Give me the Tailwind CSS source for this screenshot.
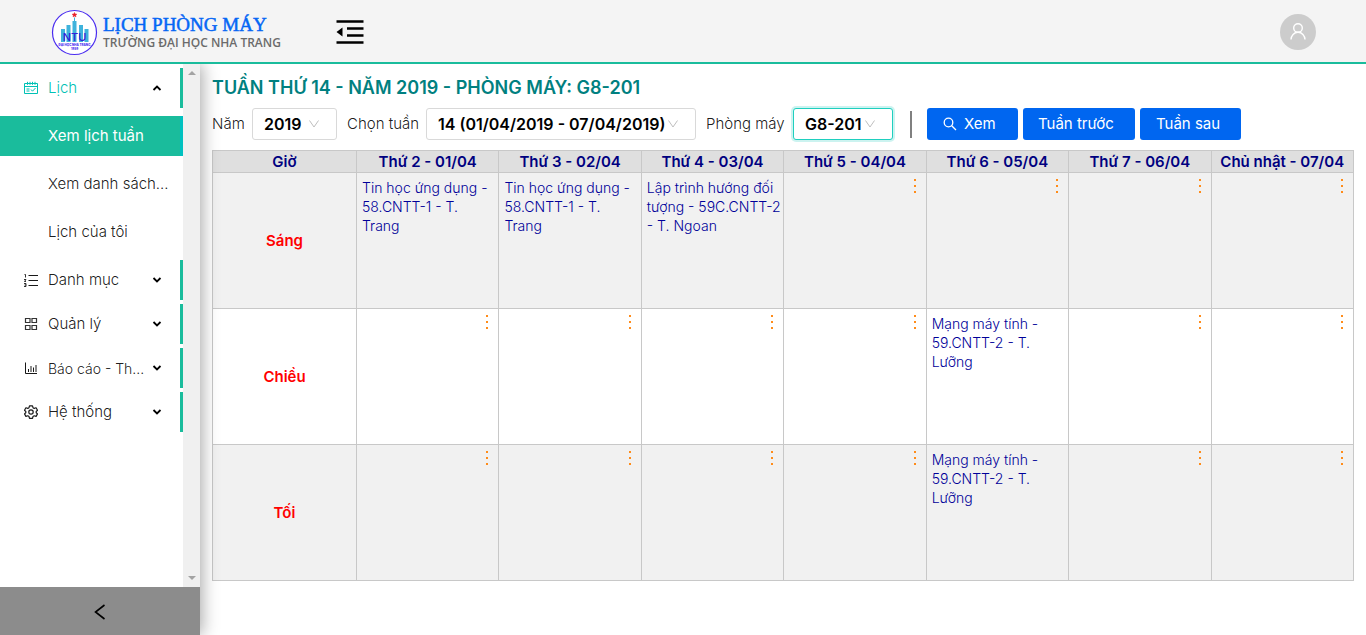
<!DOCTYPE html>
<html lang="vi">
<head>
<meta charset="utf-8">
<meta name="viewport" content="width=device-width, initial-scale=1">
<title>Lịch phòng máy</title>
<script src="https://cdn.jsdelivr.net/npm/@tailwindcss/browser@4"></script>
</head>
<body class="flex h-screen flex-col overflow-hidden bg-white font-['Inter','Liberation_Sans',sans-serif] text-[15px] font-light text-black/90">

<header class="relative z-20 flex h-16 shrink-0 items-center border-b-2 border-[#1abc9c] bg-[#f4f4f4] pt-[2px] pr-[50px] pl-[51px]">
  <a href="#" class="flex items-center gap-[5px]">
    <svg class="size-[47px]" viewBox="0 0 47 47" aria-hidden="true">
      <circle cx="23.500" cy="23.500" r="22" fill="#fff" stroke="#4a2cf0" stroke-width="1.200"/>
      <path d="M10 20h4v13h-4zM15.500 16h4v17h-4zM21.500 12h4v21h-4zM28 16h4v17h-4zM33.500 20h4v13h-4z" fill="#3fb3dc"/>
      <path d="M23.500 3.500l.7 1.500 1.700.200-1.200 1.100.300 1.600-1.500-.8-1.500.8.300-1.600-1.200-1.100 1.700-.200z" fill="#e8202a" stroke="#e8202a" stroke-width=".5"/>
      <path d="M23.500 8.500v4" stroke="#3fb3dc" stroke-width="1"/>
      <text x="23.500" y="32" text-anchor="middle" font-family="Inter, sans-serif" font-size="11" font-weight="500" fill="#3420d8">NTU</text>
      <text x="23.500" y="36.500" text-anchor="middle" font-family="Inter, sans-serif" font-size="3" font-weight="800" fill="#4a2cf0">ĐẠI HỌC NHA TRANG</text>
      <text x="23.500" y="40.500" text-anchor="middle" font-family="Inter, sans-serif" font-size="3" font-weight="800" fill="#4a2cf0">1959</text>
    </svg>
    <span class="flex flex-col whitespace-nowrap">
      <span class="font-['Liberation_Serif',serif] text-[19px] leading-[22px] font-normal text-[#0566f5] [-webkit-text-stroke:0.500px_#0566f5]">LỊCH PHÒNG MÁY</span>
      <span class="font-['Open_Sans',sans-serif] text-[12px] leading-[14px] font-semibold text-[#6b6b6b]">TRƯỜNG ĐẠI HỌC NHA TRANG</span>
    </span>
  </a>
  <button class="ml-[55px]" aria-label="Thu gọn menu">
    <svg class="h-[26px] w-7" viewBox="0 0 28 26" aria-hidden="true"><path d="M.5 2.500h27M11 9.500h16.500M11 16.500h16.500M.5 23.500h27" stroke="#000" stroke-width="2.600"/><path d="M6.500 8.500v9L.5 13z" fill="#000"/></svg>
  </button>
  <button class="ml-auto flex size-9 items-center justify-center rounded-full bg-[#ccc]" aria-label="Tài khoản">
    <svg class="size-[18px]" viewBox="0 0 18 18" fill="none" stroke="#fff" stroke-width="1.400" aria-hidden="true"><circle cx="9" cy="5" r="4.300"/><path d="M2 16.500c.2-4 3-7.200 7-7.200s6.800 3.200 7 7.200"/></svg>
  </button>
</header>

<div class="flex min-h-0 flex-1">
  <aside class="z-10 flex w-[200px] shrink-0 flex-col shadow-[2px_0_16px_rgba(0,0,0,0.35)]">
    <div class="flex min-h-0 flex-1 bg-white">
      <nav class="min-w-0 flex-1 overflow-hidden pt-1">
        <ul class="flex flex-col gap-1">
          <li>
            <a href="#" class="flex h-10 items-center border-r-[3px] border-[#1abc9c] pr-[18px] pl-6 text-[#00c1b5]">
              <svg class="mr-[10px] size-[14px] shrink-0" viewBox="0 0 14 14" fill="none" stroke="currentColor" aria-hidden="true"><path d="M.5 2.500h13v10H.5zM.5 5.500h13M3.500 .8v3M6 .8v3M8.500 .8v3M11 .8v3M2.500 8h3M2.500 10h3M7 8.500l1.500 1.700L11.500 7"/></svg>
              <span class="flex-1">Lịch</span>
              <svg class="size-[10px] text-black" viewBox="0 0 10 10" fill="none" stroke="currentColor" stroke-width="1.800" aria-hidden="true"><path d="M1.500 7 5 3.500 8.500 7"/></svg>
            </a>
            <ul class="mt-2 mb-1 flex flex-col gap-2">
              <li><a href="#" class="flex h-10 items-center border-r-[3px] border-[#00c1c0] bg-[#1abc9c] pl-12 font-normal text-white">Xem lịch tuần</a></li>
              <li><a href="#" class="flex h-10 items-center pl-12 whitespace-nowrap">Xem danh sách...</a></li>
              <li><a href="#" class="flex h-10 items-center pl-12">Lịch của tôi</a></li>
            </ul>
          </li>
          <li>
            <a href="#" class="flex h-10 items-center border-r-[3px] border-[#1abc9c] pr-[18px] pl-6">
              <svg class="mr-[10px] size-[14px] shrink-0" viewBox="0 0 14 14" fill="none" stroke="currentColor" aria-hidden="true"><path d="M4.500 2.500H14M4.500 7.500H14M4.500 12.500H14"/><path d="M.5 1.500h1v3M0 6.500h2L.5 8.500H2M0 10.500h2v3H0M.5 12H2" stroke-width=".9"/></svg>
              <span class="flex-1">Danh mục</span>
              <svg class="size-[10px]" viewBox="0 0 10 10" fill="none" stroke="#000" stroke-width="1.800" aria-hidden="true"><path d="M1.500 3 5 6.500 8.500 3"/></svg>
            </a>
          </li>
          <li>
            <a href="#" class="flex h-10 items-center border-r-[3px] border-[#1abc9c] pr-[18px] pl-6">
              <svg class="mr-[10px] size-[14px] shrink-0" viewBox="0 0 14 14" fill="none" stroke="#333" aria-hidden="true"><path d="M1.500 1.500h4.500v4H1.500zM8 1.500h4.500v4H8zM1.500 8.500h4.500v4H1.500zM8 8.500h4.500v4H8z" stroke-width="1.200"/></svg>
              <span class="flex-1">Quản lý</span>
              <svg class="size-[10px]" viewBox="0 0 10 10" fill="none" stroke="#000" stroke-width="1.800" aria-hidden="true"><path d="M1.500 3 5 6.500 8.500 3"/></svg>
            </a>
          </li>
          <li>
            <a href="#" class="flex h-10 items-center border-r-[3px] border-[#1abc9c] pr-[18px] pl-6">
              <svg class="mr-[10px] size-[14px] shrink-0" viewBox="0 0 14 14" fill="none" stroke="currentColor" aria-hidden="true"><path d="M1.500 1.500v11H13M4.500 11V8M7 11V5M9.500 11V6.500M12 11V4"/></svg>
              <span class="flex-1 text-[14px] whitespace-nowrap">Báo cáo - Th...</span>
              <svg class="size-[10px]" viewBox="0 0 10 10" fill="none" stroke="#000" stroke-width="1.800" aria-hidden="true"><path d="M1.500 3 5 6.500 8.500 3"/></svg>
            </a>
          </li>
          <li>
            <a href="#" class="flex h-10 items-center border-r-[3px] border-[#1abc9c] pr-[18px] pl-6">
              <svg class="mr-[10px] size-[14px] shrink-0" viewBox="0 0 14 14" fill="none" stroke="currentColor" stroke-width="1.200" stroke-linejoin="round" aria-hidden="true"><path d="M5.500 .8h3l.5 1.900 1.200.7 1.900-.6 1.400 2.500L12.200 6.500v1.200l1.300 1.200-1.400 2.500-1.900-.6-1.200.7-.5 1.800h-3L5 11.500l-1.200-.7-1.900.6L.5 8.900l1.300-1.200V6.500L.5 5.300l1.400-2.500 1.900.6L5 2.700z"/><circle cx="7" cy="7" r="2.200"/></svg>
              <span class="flex-1">Hệ thống</span>
              <svg class="size-[10px]" viewBox="0 0 10 10" fill="none" stroke="#000" stroke-width="1.800" aria-hidden="true"><path d="M1.500 3 5 6.500 8.500 3"/></svg>
            </a>
          </li>
        </ul>
      </nav>
      <div class="flex w-[17px] shrink-0 flex-col items-center justify-between bg-[#f0f0f0] py-[6px]" aria-hidden="true">
        <svg class="h-[5px] w-2" viewBox="0 0 8 5"><path d="M0 5 4 1l4 4z" fill="#a3a3a3"/></svg>
        <svg class="h-[5px] w-2" viewBox="0 0 8 5"><path d="M0 0l4 4 4-4z" fill="#a3a3a3"/></svg>
      </div>
    </div>
    <button class="flex h-12 shrink-0 items-center justify-center bg-[#8c8c8c] pt-[2px]" aria-label="Thu gọn">
      <svg class="size-4" viewBox="0 0 16 16" fill="none" stroke="#000" stroke-width="1.600" aria-hidden="true"><path d="M12.500 1 3.500 8l9 7"/></svg>
    </button>
  </aside>

  <main class="min-w-0 flex-1 px-3 pt-3">
    <h1 class="text-[18px] leading-6 font-semibold text-[#008080]">TUẦN THỨ 14 - NĂM 2019 - PHÒNG MÁY: G8-201</h1>

    <form class="mt-2 mb-[10px] flex items-center whitespace-nowrap">
      <label for="year" class="w-10">Năm</label>
      <div class="relative mr-[10px]">
        <select id="year" class="h-8 w-[85px] appearance-none rounded-[3px] border border-[#d9d9d9] bg-white pl-[11px] text-[16px] font-semibold text-black"><option>2019</option></select>
        <svg class="pointer-events-none absolute top-[11px] right-[17px] h-[10px] w-3" viewBox="0 0 12 10" fill="none" stroke="#bfbfbf" aria-hidden="true"><path d="M1.500 1.500 6 8l4.500-6.500"/></svg>
      </div>
      <label for="week" class="w-[79px]">Chọn tuần</label>
      <div class="relative mr-[10px]">
        <select id="week" class="h-8 w-[270px] appearance-none rounded-[3px] border border-[#d9d9d9] bg-white pl-[11px] text-[16px] font-semibold text-black"><option>14 (01/04/2019 - 07/04/2019)</option></select>
        <svg class="pointer-events-none absolute top-[11px] right-[17px] h-[10px] w-3" viewBox="0 0 12 10" fill="none" stroke="#bfbfbf" aria-hidden="true"><path d="M1.500 1.500 6 8l4.500-6.500"/></svg>
      </div>
      <label for="room" class="w-[87px]">Phòng máy</label>
      <div class="relative">
        <select id="room" class="h-8 w-[100px] appearance-none rounded-[3px] border border-[#1fcfbf] bg-white pl-[11px] text-[16px] font-semibold text-black shadow-[0_0_0_2px_rgba(0,193,181,0.2)]"><option>G8-201</option></select>
        <svg class="pointer-events-none absolute top-[11px] right-[17px] h-[10px] w-3" viewBox="0 0 12 10" fill="none" stroke="#bfbfbf" aria-hidden="true"><path d="M1.500 1.500 6 8l4.500-6.500"/></svg>
      </div>
      <span class="mr-[15px] ml-[17px] h-[27px] w-[2px] bg-[#808080]"></span>
      <div class="flex gap-[5px] font-normal text-white">
        <button type="button" class="flex h-8 w-[91px] items-center gap-[7px] rounded-[3px] bg-[#0066f0] pl-4">
          <svg class="size-[14px]" viewBox="0 0 14 14" fill="none" stroke="#fff" stroke-width="1.300" aria-hidden="true"><circle cx="5.500" cy="5.500" r="4.300"/><path d="M8.700 8.700 13 13"/></svg>
          Xem
        </button>
        <button type="button" class="h-8 w-28 rounded-[3px] bg-[#0066f0] pl-[15px] text-left">Tuần trước</button>
        <button type="button" class="h-8 w-[101px] rounded-[3px] bg-[#0066f0] pl-4 text-left">Tuần sau</button>
      </div>
    </form>

    <table class="w-full table-fixed border-collapse text-[14px] leading-[19px] text-[#000099] [&_td]:border [&_td]:border-[#c8c8c8] [&_th]:border [&_th]:border-[#c8c8c8]">
      <colgroup><col class="w-[144px]"><col><col><col><col><col><col><col></colgroup>
      <thead>
        <tr class="h-[22px] bg-[#dfdfdf] text-[15px] leading-[20px] whitespace-nowrap text-[#000080] [&_th]:font-semibold">
          <th>Giờ</th><th>Thứ 2 - 01/04</th><th>Thứ 3 - 02/04</th><th>Thứ 4 - 03/04</th><th>Thứ 5 - 04/04</th><th>Thứ 6 - 05/04</th><th>Thứ 7 - 06/04</th><th>Chủ nhật - 07/04</th>
        </tr>
      </thead>
      <tbody class="[&_td]:py-[5px] [&_td]:pr-px [&_td]:pl-[5px] [&_td]:align-top [&_th]:text-[15px] [&_th]:font-semibold [&_th]:text-[#ff0000] [&_button]:ml-auto [&_button]:flex [&_button]:h-4 [&_button]:w-[11px] [&_button]:items-center [&_button]:text-[#ff8c1a]">
        <tr class="h-[136px] bg-[#f1f1f1]">
          <th scope="row">Sáng</th>
          <td>Tin học ứng dụng -<br>58.CNTT-1 - T.<br>Trang</td>
          <td>Tin học ứng dụng -<br>58.CNTT-1 - T.<br>Trang</td>
          <td class="whitespace-nowrap">Lập trình hướng đối<br>tượng - 59C.CNTT-2<br>- T. Ngoan</td>
          <td><button aria-label="Tùy chọn"><svg class="h-[14px] w-[2px]" viewBox="0 0 2 14" fill="currentColor"><path d="M0 0h2v2H0zM0 6h2v2H0zM0 12h2v2H0z"/></svg></button></td>
          <td><button aria-label="Tùy chọn"><svg class="h-[14px] w-[2px]" viewBox="0 0 2 14" fill="currentColor"><path d="M0 0h2v2H0zM0 6h2v2H0zM0 12h2v2H0z"/></svg></button></td>
          <td><button aria-label="Tùy chọn"><svg class="h-[14px] w-[2px]" viewBox="0 0 2 14" fill="currentColor"><path d="M0 0h2v2H0zM0 6h2v2H0zM0 12h2v2H0z"/></svg></button></td>
          <td><button aria-label="Tùy chọn"><svg class="h-[14px] w-[2px]" viewBox="0 0 2 14" fill="currentColor"><path d="M0 0h2v2H0zM0 6h2v2H0zM0 12h2v2H0z"/></svg></button></td>
        </tr>
        <tr class="h-[136px] bg-white">
          <th scope="row">Chiều</th>
          <td><button aria-label="Tùy chọn"><svg class="h-[14px] w-[2px]" viewBox="0 0 2 14" fill="currentColor"><path d="M0 0h2v2H0zM0 6h2v2H0zM0 12h2v2H0z"/></svg></button></td>
          <td><button aria-label="Tùy chọn"><svg class="h-[14px] w-[2px]" viewBox="0 0 2 14" fill="currentColor"><path d="M0 0h2v2H0zM0 6h2v2H0zM0 12h2v2H0z"/></svg></button></td>
          <td><button aria-label="Tùy chọn"><svg class="h-[14px] w-[2px]" viewBox="0 0 2 14" fill="currentColor"><path d="M0 0h2v2H0zM0 6h2v2H0zM0 12h2v2H0z"/></svg></button></td>
          <td><button aria-label="Tùy chọn"><svg class="h-[14px] w-[2px]" viewBox="0 0 2 14" fill="currentColor"><path d="M0 0h2v2H0zM0 6h2v2H0zM0 12h2v2H0z"/></svg></button></td>
          <td>Mạng máy tính -<br>59.CNTT-2 - T.<br>Lưỡng</td>
          <td><button aria-label="Tùy chọn"><svg class="h-[14px] w-[2px]" viewBox="0 0 2 14" fill="currentColor"><path d="M0 0h2v2H0zM0 6h2v2H0zM0 12h2v2H0z"/></svg></button></td>
          <td><button aria-label="Tùy chọn"><svg class="h-[14px] w-[2px]" viewBox="0 0 2 14" fill="currentColor"><path d="M0 0h2v2H0zM0 6h2v2H0zM0 12h2v2H0z"/></svg></button></td>
        </tr>
        <tr class="h-[136px] bg-[#f1f1f1]">
          <th scope="row">Tối</th>
          <td><button aria-label="Tùy chọn"><svg class="h-[14px] w-[2px]" viewBox="0 0 2 14" fill="currentColor"><path d="M0 0h2v2H0zM0 6h2v2H0zM0 12h2v2H0z"/></svg></button></td>
          <td><button aria-label="Tùy chọn"><svg class="h-[14px] w-[2px]" viewBox="0 0 2 14" fill="currentColor"><path d="M0 0h2v2H0zM0 6h2v2H0zM0 12h2v2H0z"/></svg></button></td>
          <td><button aria-label="Tùy chọn"><svg class="h-[14px] w-[2px]" viewBox="0 0 2 14" fill="currentColor"><path d="M0 0h2v2H0zM0 6h2v2H0zM0 12h2v2H0z"/></svg></button></td>
          <td><button aria-label="Tùy chọn"><svg class="h-[14px] w-[2px]" viewBox="0 0 2 14" fill="currentColor"><path d="M0 0h2v2H0zM0 6h2v2H0zM0 12h2v2H0z"/></svg></button></td>
          <td>Mạng máy tính -<br>59.CNTT-2 - T.<br>Lưỡng</td>
          <td><button aria-label="Tùy chọn"><svg class="h-[14px] w-[2px]" viewBox="0 0 2 14" fill="currentColor"><path d="M0 0h2v2H0zM0 6h2v2H0zM0 12h2v2H0z"/></svg></button></td>
          <td><button aria-label="Tùy chọn"><svg class="h-[14px] w-[2px]" viewBox="0 0 2 14" fill="currentColor"><path d="M0 0h2v2H0zM0 6h2v2H0zM0 12h2v2H0z"/></svg></button></td>
        </tr>
      </tbody>
    </table>
  </main>
</div>
</body>
</html>
